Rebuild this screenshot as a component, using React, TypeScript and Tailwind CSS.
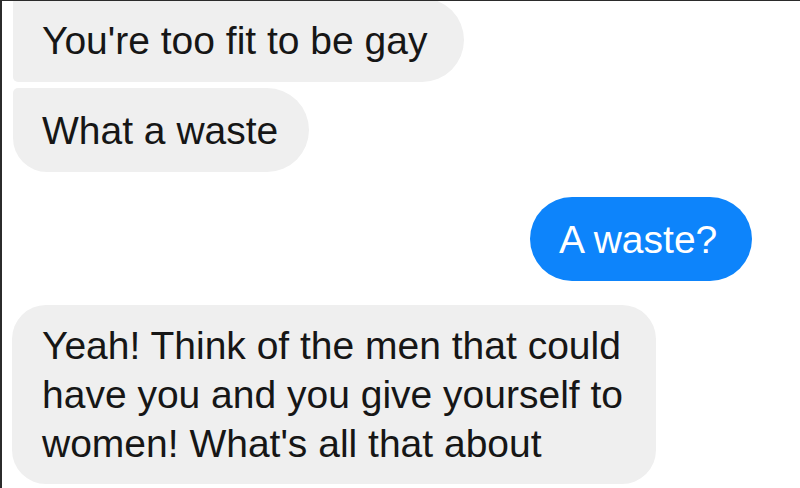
const font = { fontFamily: '"Liberation Sans", Arial, sans-serif' };

export default function App() {
  return (
    <div
      className="w-[800px] h-[488px] overflow-hidden bg-white border-t border-l-2 border-[#2b2b2b] text-[39px] leading-[49px] text-[#161616]"
      style={font}
    >
      <div className="flex flex-col">
        <div className="-mt-[3px] ml-[11px] flex">
          <div className="w-[451px] h-[84px] pl-[29px] pt-[18px] pb-[17px] bg-[#efefef] rounded-l-[5px] rounded-r-[42px] whitespace-nowrap">
            You're too fit to be gay
          </div>
        </div>

        <div className="mt-[6px] ml-[11px] flex">
          <div className="w-[296px] h-[84px] pl-[29px] pt-[18px] pb-[17px] bg-[#efefef] rounded-tl-[5px] rounded-bl-[34px] rounded-r-[42px] whitespace-nowrap">
            What a waste
          </div>
        </div>

        <div className="mt-[25px] mr-[48px] flex justify-end">
          <div className="w-[222px] h-[84px] pl-[29px] pt-[18px] pb-[17px] bg-[#0d84fb] text-white rounded-[42px] whitespace-nowrap">
            A waste?
          </div>
        </div>

        <div className="mt-[24px] ml-[10px] flex">
          <div className="w-[644px] h-[179px] pl-[30px] pt-[16px] pb-[16px] bg-[#efefef] rounded-[34px] whitespace-nowrap">
            Yeah! Think of the men that could
            <br />
            have you and you give yourself to
            <br />
            women! What's all that about
          </div>
        </div>
      </div>
    </div>
  );
}
